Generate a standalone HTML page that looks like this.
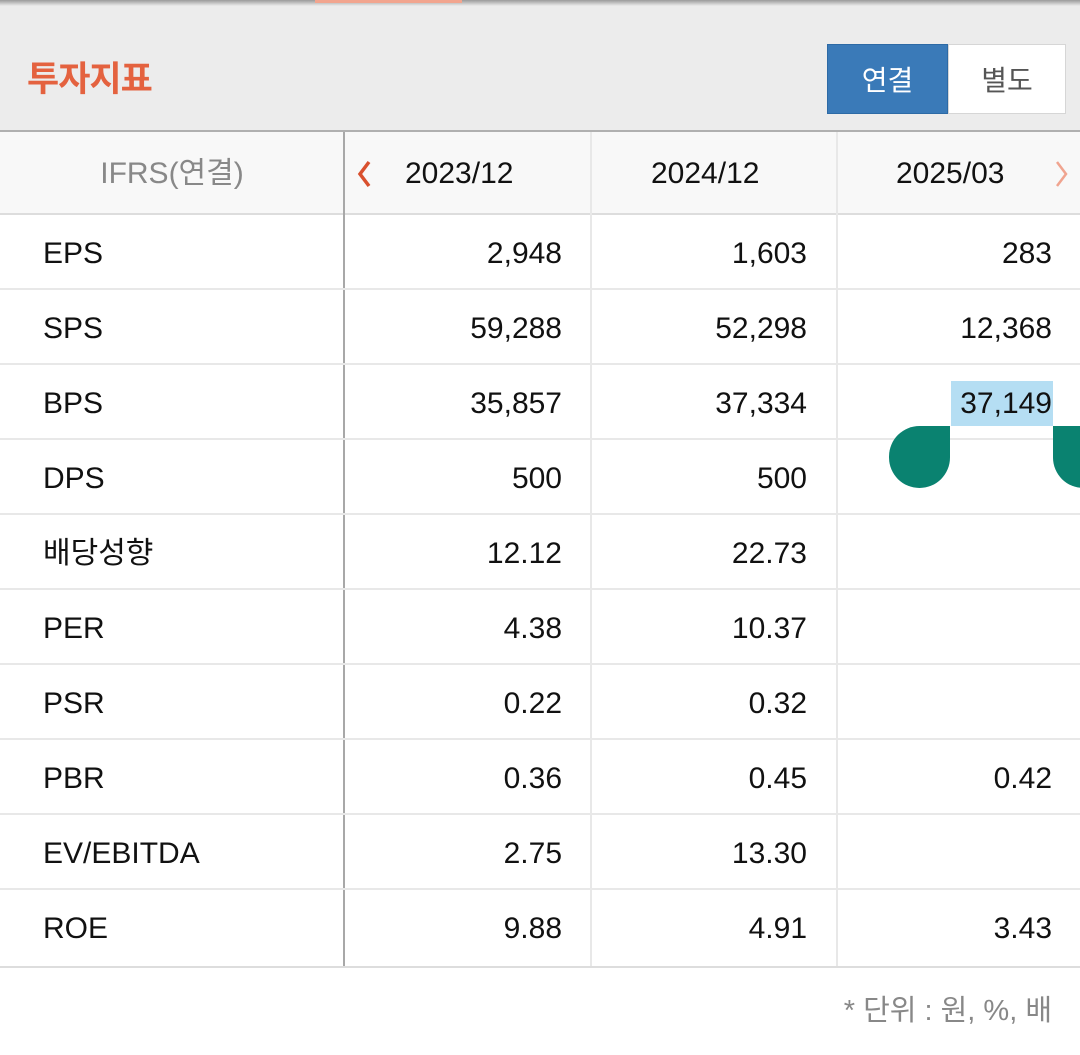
<!DOCTYPE html>
<html><head><meta charset="utf-8"><style>
*{margin:0;padding:0;box-sizing:border-box}
body{width:1080px;height:1055px;background:#fff;font-family:"Liberation Sans","Noto Sans CJK KR",sans-serif;position:relative;overflow:hidden}
.top{position:absolute;left:0;top:0;width:1080px;height:131px;background:#ececec}
.shadow{position:absolute;left:0;top:0;width:1080px;height:6px;background:linear-gradient(#9a9a9a,#ececec)}
.orange{position:absolute;left:315px;top:0;width:147px;height:3px;background:#f2a58f}
.title{position:absolute;left:27px;top:55px;height:50px;line-height:50px;font-size:35px;font-weight:bold;color:#e4623f;letter-spacing:-1px}
.btn{position:absolute;top:44px;height:70px;font-size:28px;display:flex;align-items:center;justify-content:center}
.b1{left:827px;width:121px;background:#3a7ab8;color:#fff;border:1px solid #2d6aa5}
.b2{left:948px;width:118px;background:#fff;color:#555;border:1px solid #d6d6d6}
.hline{position:absolute;left:0;width:1080px;height:2px;background:#b0b0b0}
.head{position:absolute;left:0;top:132px;width:1080px;height:82px;background:#f8f8f8}
.cell{position:absolute;font-size:30px;color:#111;height:40px;line-height:40px;white-space:nowrap}
.vl{position:absolute;width:2px;background:#e8e8e8}
.rl{position:absolute;left:0;width:1080px;height:2px;background:#e8e8e8}
</style></head><body>
<div class="top"></div><div class="shadow"></div><div class="orange"></div>
<div class="title">투자지표</div>
<div class="btn b1">연결</div><div class="btn b2">별도</div>
<div class="hline" style="top:130px"></div>
<div class="head"></div>
<div class="cell" style="left:0;width:344px;top:154px;text-align:center;color:#888">IFRS(연결)</div>
<svg style="position:absolute;left:354px;top:160px" width="20" height="28"><path d="M15 2 L6 14 L15 26" fill="none" stroke="#d9502e" stroke-width="3.5"/></svg>
<div class="cell" style="left:405px;top:154px">2023/12</div>
<div class="cell" style="left:651px;top:154px">2024/12</div>
<div class="cell" style="left:896px;top:154px">2025/03</div>
<svg style="position:absolute;left:1052px;top:160px" width="20" height="28"><path d="M5 2 L14 14 L5 26" fill="none" stroke="#f0a48f" stroke-width="2.5"/></svg>
<div class="rl" style="top:213px;background:#ddd"></div>
<div class="vl" style="left:343px;top:132px;height:836px;background:#a8a8a8"></div>
<div class="vl" style="left:590px;top:132px;height:836px"></div>
<div class="vl" style="left:836px;top:132px;height:836px"></div>
<div id="rows"></div>
<div class="hline" style="top:966px;background:#ddd"></div>
<div class="cell" style="right:28px;top:991px;color:#888;font-size:29px">* 단위 : 원, %, 배</div>
<div style="position:absolute;left:951px;top:381px;width:102px;height:45px;background:#b5def3"></div>
<div style="position:absolute;left:889px;top:426px;width:61px;height:62px;background:#0a8270;border-radius:31px 0 31px 31px"></div>
<div style="position:absolute;left:1053px;top:426px;width:61px;height:62px;background:#0a8270;border-radius:0 31px 31px 31px"></div>
<script>
var d=[["EPS","2,948","1,603","283"],["SPS","59,288","52,298","12,368"],["BPS","35,857","37,334","37,149"],["DPS","500","500",""],["배당성향","12.12","22.73",""],["PER","4.38","10.37",""],["PSR","0.22","0.32",""],["PBR","0.36","0.45","0.42"],["EV/EBITDA","2.75","13.30",""],["ROE","9.88","4.91","3.43"]];
var h="";d.forEach(function(r,i){var y=215+i*75;
if(i>0)h+='<div class="rl" style="top:'+(y-2)+'px"></div>';
h+='<div class="cell" style="left:43px;top:'+(y+19)+'px">'+r[0]+'</div>';
[562,807,1052].forEach(function(x,j){h+='<div class="cell" style="right:'+(1080-x)+'px;top:'+(y+19)+'px;z-index:2">'+r[j+1]+'</div>';});});
document.getElementById("rows").innerHTML=h;
</script>
</body></html>
